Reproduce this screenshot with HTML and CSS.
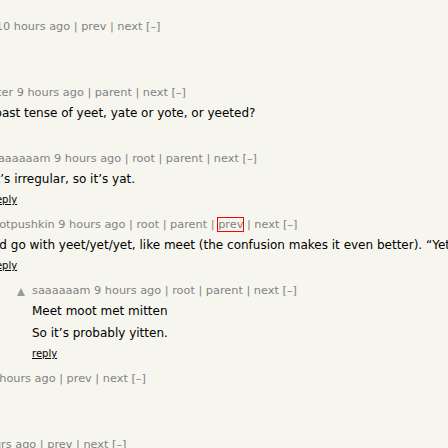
FILE: index.html
```html
<!DOCTYPE html>
<html>
<head>
<meta charset="utf-8">
<link rel="stylesheet" href="styles.css">
</head>
<body>
<div class="thread">

  <div class="comment l0">
    <div class="vote"><svg class="arrow" viewBox="0 0 10 10" width="10" height="10"><polygon points="5,1 9,9 1,9"/></svg></div>
    <div class="body">
      <div class="comhead"><a href="#">languagegeek</a> <a href="#">10 hours ago</a> | <a href="#">prev</a> | <a href="#">next</a> <a href="#">[–]</a></div>
      <div class="text"><p>Yote.</p></div>
      <div class="reply"><a href="#">reply</a></div>
    </div>
  </div>

  <div class="comment l1">
    <div class="vote"><svg class="arrow" viewBox="0 0 10 10" width="10" height="10"><polygon points="5,1 9,9 1,9"/></svg></div>
    <div class="body">
      <div class="comhead"><a href="#">yeetmister</a> <a href="#">9 hours ago</a> | <a href="#">parent</a> | <a href="#">next</a> <a href="#">[–]</a></div>
      <div class="text"><p>So the past tense of yeet, yate or yote, or yeeted?</p></div>
      <div class="reply"><a href="#">reply</a></div>
    </div>
  </div>

  <div class="comment l2">
    <div class="vote"><svg class="arrow" viewBox="0 0 10 10" width="10" height="10"><polygon points="5,1 9,9 1,9"/></svg></div>
    <div class="body">
      <div class="comhead"><a href="#">saaaaaam</a> <a href="#">9 hours ago</a> | <a href="#">root</a> | <a href="#">parent</a> | <a href="#">next</a> <a href="#">[–]</a></div>
      <div class="text"><p>It’s irregular, so it’s yat.</p></div>
      <div class="reply"><a href="#">reply</a></div>
    </div>
  </div>

  <div class="comment l2">
    <div class="vote"><svg class="arrow" viewBox="0 0 10 10" width="10" height="10"><polygon points="5,1 9,9 1,9"/></svg></div>
    <div class="body">
      <div class="comhead"><a href="#">notpushkin</a> <a href="#">9 hours ago</a> | <a href="#">root</a> | <a href="#">parent</a> | <a href="#" class="focused">prev</a> | <a href="#">next</a> <a href="#">[–]</a></div>
      <div class="text"><p>I’d go with yeet/yet/yet, like meet (the confusion makes it even better). “Yet” is already taken though.</p></div>
      <div class="reply"><a href="#">reply</a></div>
    </div>
  </div>

  <div class="comment l3">
    <div class="vote"><svg class="arrow" viewBox="0 0 10 10" width="10" height="10"><polygon points="5,1 9,9 1,9"/></svg></div>
    <div class="body">
      <div class="comhead"><a href="#">saaaaaam</a> <a href="#">9 hours ago</a> | <a href="#">root</a> | <a href="#">parent</a> | <a href="#">next</a> <a href="#">[–]</a></div>
      <div class="text"><p>Meet moot met mitten</p><p>So it’s probably yitten.</p></div>
      <div class="reply"><a href="#">reply</a></div>
    </div>
  </div>

  <div class="comment l0">
    <div class="vote"><svg class="arrow" viewBox="0 0 10 10" width="10" height="10"><polygon points="5,1 9,9 1,9"/></svg></div>
    <div class="body">
      <div class="comhead"><a href="#">wordsmithist</a> <a href="#">9 hours ago</a> | <a href="#">prev</a> | <a href="#">next</a> <a href="#">[–]</a></div>
      <div class="text"><p>Yeeted.</p></div>
      <div class="reply"><a href="#">reply</a></div>
    </div>
  </div>

  <div class="comment l0">
    <div class="vote"><svg class="arrow" viewBox="0 0 10 10" width="10" height="10"><polygon points="5,1 9,9 1,9"/></svg></div>
    <div class="body">
      <div class="comhead"><a href="#">wordnerd</a> <a href="#">9 hours ago</a> | <a href="#">prev</a> | <a href="#">next</a> <a href="#">[–]</a></div>
      <div class="text"><p>Yaught.</p></div>
      <div class="reply"><a href="#">reply</a></div>
    </div>
  </div>

</div>
</body>
</html>
```

FILE: styles.css
```css
html, body {
  margin: 0;
  padding: 0;
  overflow: hidden;
  background: #f6f6ef;
}

body {
  font-family: "DejaVu Sans", Verdana, sans-serif;
  color: #000;
}

.thread {
  width: 1400px;
  margin-left: -104px;
  padding-top: 17px;
}

.comment {
  display: flex;
  margin-bottom: 5px;
}

.l0 { padding-left: 0; }
.l1 { padding-left: 40px; }
.l2 { padding-left: 80px; }
.l3 { padding-left: 120px; }

.vote {
  width: 16px;
  flex: none;
  padding-top: 6px;
}

.arrow {
  display: block;
}

.arrow polygon {
  fill: #9a9a9a;
}

.body {
  flex: 1;
}

.comhead {
  font-size: 11.3px;
  line-height: 20px;
  color: #828282;
  white-space: nowrap;
}

.comhead a {
  color: #828282;
  text-decoration: none;
}

.comhead a.focused {
  outline: 1px solid #ff0000;
}

.text {
  font-size: 12px;
  line-height: 20px;
  white-space: nowrap;
}

.text p {
  margin: 0;
}

.text p + p {
  margin-top: 2px;
}

.reply {
  margin-top: 1px;
  font-size: 10px;
  line-height: 20px;
}

.reply a {
  color: #000;
  text-decoration: underline;
}
```
